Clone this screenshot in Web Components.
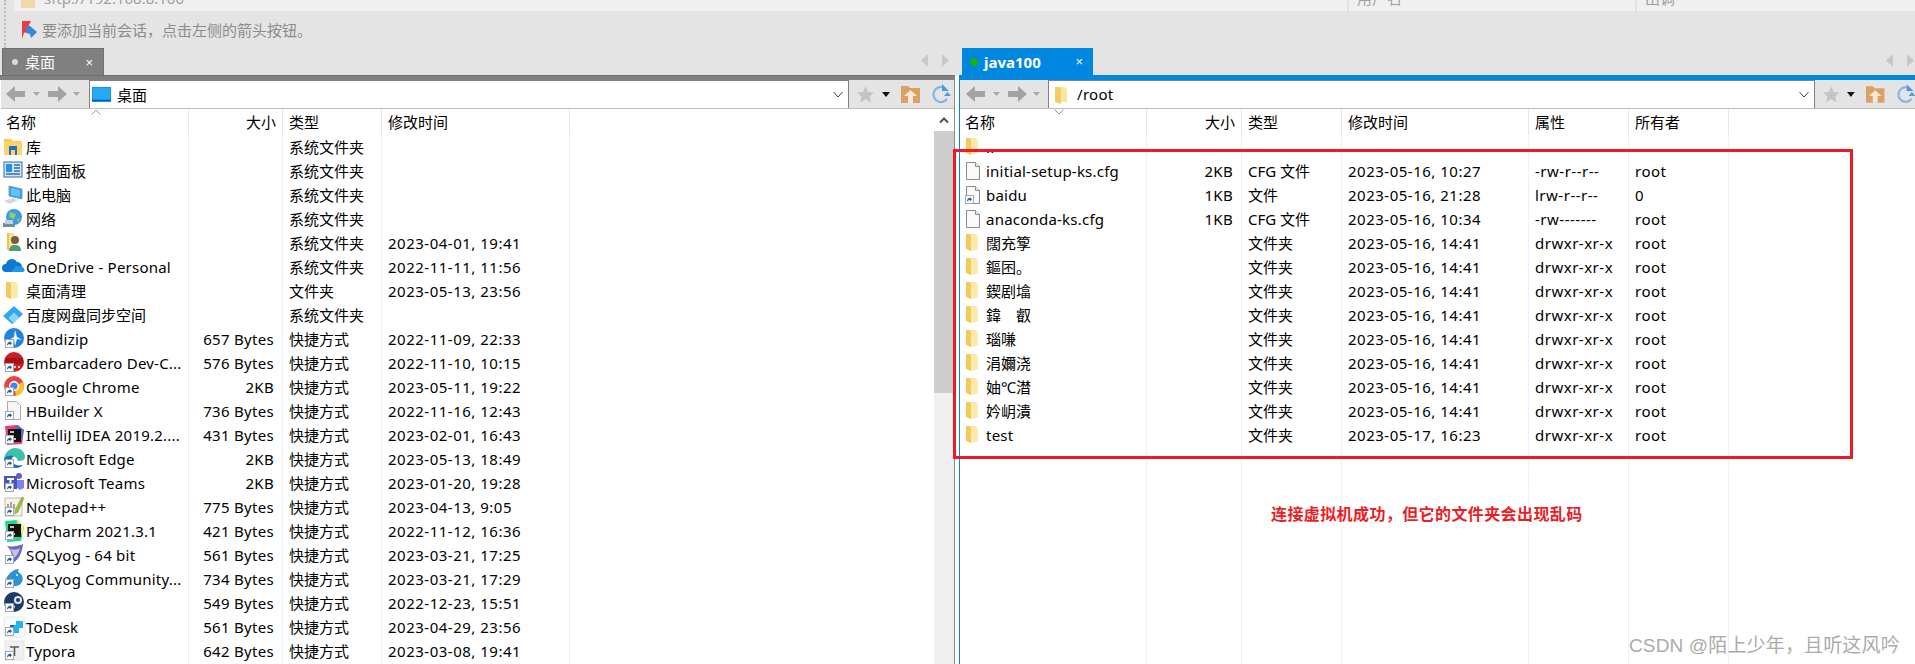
<!DOCTYPE html>
<html lang="zh"><head><meta charset="utf-8"><title>FinalShell</title>
<style>
html,body{margin:0;padding:0;background:#fff}
body{width:1915px;height:664px;overflow:hidden;position:relative;font:15px "Noto Sans","Noto Sans CJK SC",sans-serif;color:#000}
</style></head><body>
<session-bar></session-bar>
<div id="panes" style="display:flex;height:616px">
  <file-pane id="l" style="width:955px" tab="桌面" path="桌面" kind="desk" color="#808080" cols="188,94,99,188" heads="名称,大小,类型,修改时间"></file-pane>
  <file-pane id="r" style="width:956px;margin-left:4px" tab="java100" path="/root" kind="folder" color="#0087e0" cols="187,95,100,187,100,100" heads="名称,大小,类型,修改时间,属性,所有者" active></file-pane>
</div>
<note-overlay></note-overlay>
<script>
const I={
folder:'<path d="M4 3h4l1 2v15l-5-2z" fill="#f5cb58"/><path d="M8 3h5l3 2v13H9V5z" fill="#fde7a2"/><path d="M9 5v15l7-2V5z" fill="#fdeab0"/>',
doc:'<path d="M4.500 3.500h9l4 4v13h-13z" fill="#fafafa" stroke="#8a8a8a"/><path d="M13.500 3.500v4h4" fill="#eee" stroke="#8a8a8a"/>',
lib:'<path d="M2 4h7l2 2h9v14H2z" fill="#fcc94f"/><path d="M2 7h18v13H2z" fill="#fbd36b"/><path d="M7 11h8v9h-2v-5H9v5H7z" fill="#1c74c4"/>',
panel:'<rect x="2" y="3" width="18" height="15" fill="#cfe6fa" stroke="#2a6fa8"/><rect x="4" y="5" width="6" height="8" fill="#2b8fdc"/><path d="M12 6h6M12 9h6M12 12h6M4 15h14" stroke="#3372a8" stroke-width="1.5"/>',
pc:'<path d="M7 3l13 3v10L7 13z" fill="#2d9be8" stroke="#7fa7c4"/><path d="M9 5l9 2v7l-9-2z" fill="#68c2f8"/><path d="M2 18l9-3 5 2-8 4z" fill="#d4d8dc"/>',
net:'<circle cx="12" cy="10" r="8" fill="#3d9bdc"/><path d="M8 5l6 2-2 5-5-2zM15 12l3-1-2 5z" fill="#8cd067"/><path d="M1 16h12v4H1z" fill="#6d8fa6"/><path d="M3 13h8v4H3z" fill="#bcd2e0"/>',
king:'<path d="M6 2h6v14H6z" fill="#fbe08c"/><path d="M5 2h2v17H5z" fill="#f0c14f"/><circle cx="13" cy="9" r="4" fill="#7a5a3c"/><path d="M7 20c0-5 3-6 6-6s6 1 6 6z" fill="#4f9a78"/>',
cloud:'<path d="M4 17a4 4 0 0 1 0-8 6 6 0 0 1 11-2 5 5 0 0 1 5 5 3 3 0 0 1 1 5z" fill="#0f78d4"/><path d="M9 17l5-6 6 1 3 3-2 2z" fill="#1e9ae8"/>',
baidu:'<path d="M12 3l9 8-4 4-5-5-5 5 5 5-2 1-9-8z" fill="#30a7ee"/><path d="M12 10l5 5-5 5-5-5z" fill="#8ad4fa"/>',
bandi:'<circle cx="12" cy="11" r="10" fill="#1f84e0"/><path d="M13 3l2 7 5 3-5-1-2 7-1-7-5 1 5-3z" fill="#fff"/>',
dev:'<circle cx="12" cy="11" r="10" fill="#c91f25"/><rect x="3" y="7" width="18" height="6" fill="#a81116"/><path d="M6 16h3M11 16h3M16 16h2" stroke="#fff" stroke-width="1.5"/>',
chrome:'<circle cx="12" cy="11" r="10" fill="#e5453a"/><path d="M12 11L3 16a10 10 0 0 0 9 5z" fill="#35a853"/><path d="M12 11l9-4a10 10 0 0 1-7 14z" fill="#fbc02d"/><circle cx="12" cy="11" r="5" fill="#fff"/><circle cx="12" cy="11" r="3.6" fill="#4285f4"/>',
hb:'<path d="M5.500 2.500h9l4 4v14h-13z" fill="#f5f6f7" stroke="#a9a9a9"/>',
idea:'<path d="M3 3l13-1 6 5-2 14-15 1z" fill="#e0407c"/><path d="M13 2l9 5-3 9z" fill="#2d7ae0"/><rect x="6" y="6" width="13" height="13" fill="#111"/><path d="M8 9h4M8 16h6" stroke="#fff" stroke-width="1.5"/>',
edge:'<path d="M2 12C3 5 8 1 13 1c6 0 10 4 10 9 0 3-3 4-7 4-1-4-5-6-9-4z" fill="#38c3a8"/><path d="M2 12c1 6 6 9 12 9 3 0 5-1 7-3-5 1-9 0-11-3-1-3 0-4 2-6-5-1-9 0-10 3z" fill="#1a6dc0"/>',
teams:'<circle cx="17" cy="5" r="3" fill="#5b5fc7"/><path d="M14 9h8v8l-4 2-4-3z" fill="#7b83eb"/><rect x="2" y="5" width="13" height="13" fill="#4b53bc"/><path d="M5 8h7M8.500 8v8" stroke="#fff" stroke-width="2"/>',
np:'<rect x="3" y="3" width="17" height="18" fill="#f5f3e5" stroke="#bbb"/><path d="M6 14V9M9 14V7M12 14V9" stroke="#555"/><path d="M13 15l7-13 2 1-6 14-3 2z" fill="#8ac63f" stroke="#b58d2c" stroke-width=".6"/>',
pycharm:'<path d="M3 2l12-1 7 7-3 14-14 1z" fill="#21d789"/><path d="M14 1l8 7-2 8z" fill="#fcf84a"/><rect x="6" y="5" width="13" height="13" fill="#111"/><path d="M8 8h4M8 15h5" stroke="#fff" stroke-width="1.5"/>',
sql:'<path d="M5 3c6 1 11 0 16-2-1 9-4 17-13 20 3-5 3-12-3-18z" fill="#7068b8"/><path d="M8 6c4 1 7 1 10-1-1 4-3 8-6 10 0-3-2-6-4-9z" fill="#c4c2e6"/>',
sqlc:'<path d="M4 12C7 5 13 2 17 2l-1 3c4 2 6 6 4 10-2 4-7 5-11 4l1-5c-3 0-4-1-6-2z" fill="#2f92d8"/><circle cx="15" cy="8" r="1" fill="#fff"/>',
steam:'<circle cx="12" cy="11" r="10" fill="#1a3b66"/><circle cx="16" cy="9" r="4" fill="#dfe7ef"/><circle cx="16" cy="9" r="2" fill="#1a3b66"/><path d="M2 14l8 4a3 3 0 0 0 3-3l-4-2z" fill="#dfe7ef"/>',
todesk:'<rect x="2" y="2" width="21" height="20" rx="3" fill="#f8fafc" stroke="#e4e8ec"/><path d="M14 6h7v7h-4v5h-5V10h2z" fill="#1fb7ea"/><path d="M8 10h4v8H8z" fill="#1b66d8"/>',
typora:'<rect x="3" y="2" width="19" height="19" fill="#efefef" stroke="#e3e3e3"/><path d="M8 8h9M12.500 8v9" stroke="#5d5d5d" stroke-width="1.6"/>'
};
class FileIcon extends HTMLElement{
  connectedCallback(){
    const s=this.attachShadow({mode:'open'});
    const t=this.getAttribute('type'),sh=this.hasAttribute('shortcut');
    s.innerHTML=`<style>:host{display:block;position:relative;width:24px;height:24px;flex:none}svg{display:block}</style>
    <svg width="24" height="24" viewBox="0 0 24 24">${I[t]||''}${sh?'<g transform="translate(3 0)"><rect x="0.500" y="12.500" width="8" height="8" fill="#fff" stroke="#a8a8a8"/><path d="M2 19c0-3 1-3.800 2.800-4V14l2.200 2.200L4.800 18.500V17c-1 0-2 .6-2.800 2" fill="#1a5fa8"/></g>':''}</svg>`;
  }
}
customElements.define('file-icon',FileIcon);

class SessionBar extends HTMLElement{
  connectedCallback(){
    this.attachShadow({mode:'open'}).innerHTML=`<style>
    :host{display:block;height:75px;background:#e4e4e4;position:relative;color:#999;font:15px "Noto Sans","Noto Sans CJK SC",sans-serif}
    .grip{position:absolute;left:4px;top:0;height:48px;border-left:2px dotted #bdbdbd}
    .row{margin-left:14px;height:11px;background:#f0f0f0;display:flex;overflow:hidden;line-height:20px}
    .row>div{margin-top:-12px;white-space:nowrap;color:#a0a0a0}
    .a{width:1333px;display:flex;padding-left:7px;box-sizing:border-box;gap:9px}
    .b{width:288px;box-sizing:border-box;padding-left:8px;border-left:2px solid #e2e2e2}
    .c{flex:1;padding-left:8px;border-left:2px solid #e2e2e2}
    .hint{display:flex;align-items:center;height:37px;padding-left:21px;gap:5px;color:#8c8c8c}
    </style>
    <div class="grip"></div>
    <div class="row"><div class="a"><svg width="14" height="20" viewBox="0 0 14 20"><rect y="8" width="14" height="12" fill="#f0d8a8"/></svg><span>sftp://192.168.8.100</span></div><div class="b">用户名</div><div class="c">出调</div></div>
    <div class="hint"><svg width="16" height="18" viewBox="0 0 16 18"><path d="M1 0h9l-3 6 1 4-5 2-2 6z" fill="#ee3a43"/><path d="M5 5h4l7 6-6 6-1-4-4-1z" fill="#3d83d8"/></svg><span>要添加当前会话，点击左侧的箭头按钮。</span></div>`;
  }
}
customElements.define('session-bar',SessionBar);

class FilePane extends HTMLElement{
  connectedCallback(){
    const a=n=>this.getAttribute(n);
    const cols=a('cols').split(',').map(x=>x+'px').join(' ');
    const heads=a('heads').split(',');
    const active=this.hasAttribute('active');
    const s=this.attachShadow({mode:'open'});
    const arrow=(d)=>`<svg width="20" height="20" viewBox="0 0 20 20"><path d="${d}" fill="#a3a3a3"/></svg>`;
    const drop=`<svg width="9" height="6" viewBox="0 0 9 6"><path d="M1 1h7L4.500 5z" fill="#a8a8a8"/></svg>`;
    const icon=a('kind')==='desk'
      ?'<svg width="19" height="15" viewBox="0 0 19 15"><rect width="19" height="15" fill="#0e97ee"/><rect y="13" width="19" height="1" fill="#0a5a9c"/><rect x="1" y="1" width="17" height="11" fill="#27a8f5"/></svg>'
      :'<svg width="14" height="20" viewBox="0 0 14 20"><path d="M1 2h5l1 2v15l-6-2z" fill="#f3cd62"/><path d="M6 2h5l2 3v12H7V4z" fill="#fde59d"/></svg>';
    s.innerHTML=`<style>
    :host{display:block;position:relative;min-width:0;--c:${a('color')};font:15px "Noto Sans","Noto Sans CJK SC",sans-serif}
    .tabs{position:absolute;left:${active?'3px':'2px'};top:-27px;height:27px;width:${active?'131px':'102px'};background:var(--c);color:#fff;display:flex;align-items:center;box-sizing:border-box;${active?'':'border:1px solid #707070;border-bottom:0;'}}
    .dot{width:${active?8:6}px;height:${active?8:6}px;border-radius:50%;background:${active?'#12b312':'#d8d8d8'};margin-left:${active?8:9}px;flex:none}
    .tt{margin-left:${active?6:7}px;font-weight:${active?700:400};flex:1;line-height:20px}
    .x{margin-right:10px;font:13px "Liberation Sans",sans-serif}
    .nav{position:absolute;top:-21px;right:${active?'1px':'6px'};display:flex;gap:12px}
    .bar{height:5px;background:var(--c);border-top:${active?0:'1px solid #6f6f6f'};box-sizing:border-box}
    .box{border-left:1px solid ${active?'#0087e0':'transparent'};border-right:${active?0:'1px solid #8a8a8a'};height:584px;box-sizing:border-box}
    .tb{height:28px;background:#e4e4e4;display:flex;align-items:center;position:relative;border-bottom:1px solid #bdbdbd}
    .addr{position:absolute;left:88px;right:${active?'100px':'105px'};top:0;height:28px;background:#fff;border:1px solid #808080;border-bottom:0;box-sizing:border-box;display:flex;align-items:center;padding-left:${active?5:2}px;gap:${active?9:6}px;line-height:20px}
    .addr span{${active?'margin-top:-2px;letter-spacing:.3px':''}}
    .addr .chev{position:absolute;right:5px;top:10px}
    .left{display:flex;align-items:center;padding-left:${active?6:5}px;height:28px}
    .right{position:absolute;right:0;top:0;height:28px;width:${active?'100px':'105px'};display:flex;align-items:center}
    .table{position:relative;height:555px;overflow:hidden;background:#fff}
    .hd{display:grid;grid-template-columns:${cols};height:26px;line-height:26px}
    .hd>div{padding-left:6px;border-right:1px solid #e6e6e6;box-sizing:border-box}
    .hd>div:first-child{padding-left:5px}
    .hd>div.n{text-align:right;padding-right:6px}
    .cols{position:absolute;left:0;top:26px;bottom:0;display:grid;grid-template-columns:${cols}}
    .cols>div{border-right:1px solid #e8f0fa;box-sizing:border-box}
    .sort{position:absolute;left:${active?'94px':'90px'};top:0}
    .sb{position:absolute;right:0;top:0;bottom:0;width:20px;background:#f0f0f0;display:${active?'none':'block'}}
    .sb i{display:block;height:22px;background:#fff;position:relative}
    .sb b{display:block;height:262px;background:#cdcdcd}
    .sb svg{position:absolute;left:5px;top:7px}
    .rows{position:relative}
    ::slotted(file-row){--cols:${cols};--pad:${active?2:1}px}
    </style>
    <div class="tabs"><span class="dot"></span><span class="tt">${a('tab')}</span><span class="x">×</span></div>
    <div class="nav"><svg width="8" height="13" viewBox="0 0 8 13"><path d="M7 0v13L0 6.500z" fill="#c8c8c8"/></svg><svg width="8" height="13" viewBox="0 0 8 13"><path d="M1 0v13l7-6.500z" fill="#c8c8c8"/></svg></div>
    <div class="bar"></div>
    <div class="box">
    <div class="tb">
      <div class="left">
        ${arrow('M0 10l9-8v5h10v6H9v5z')}<span style="width:6px"></span>${drop}<span style="width:6px"></span>${arrow('M20 10l-9-8v5H1v6h10v5z')}<span style="width:5px"></span>${drop}
      </div>
      <div class="addr">${icon}<span>${a('path')}</span><svg class="chev" width="10" height="7" viewBox="0 0 10 7"><path d="M.5 1L5 6l4.500-5" fill="none" stroke="#444"/></svg></div>
      <div class="right">
        <svg style="margin-left:8px" width="17" height="17" viewBox="0 0 17 17"><path d="M8.500 0l2.500 6 6 .5-4.500 4 1.500 6-5.500-3.200L3 16.500l1.500-6L0 6.500 6 6z" fill="#c4c4c4"/></svg>
        <svg style="margin-left:8px" width="8" height="5" viewBox="0 0 8 5"><path d="M0 0h8L4 5z" fill="#111"/></svg>
        <svg style="margin-left:11px" width="19" height="18" viewBox="0 0 19 18"><path d="M0 1h7l2 2h10v15H0z" fill="#dba064"/><path d="M9.500 5L16 11h-4v7H7v-7H3z" fill="#f5ead6"/></svg>
        <svg style="margin-left:11px" width="20" height="20" viewBox="0 0 20 20"><path d="M14 4.200A7.500 7.500 0 1 0 16 15" fill="none" stroke="#7fb6e6" stroke-width="2.200"/><path d="M11 0v7l7 0z M13 12h7l-3.500-4z" fill="#4c9be0"/></svg>
      </div>
    </div>
    <div class="table">
      <div class="cols">${heads.map(()=>'<div></div>').join('')}</div>
      <div class="hd">${heads.map(h=>`<div class="${h==='大小'?'n':''}">${h}</div>`).join('')}</div>
      <svg class="sort" width="10" height="6" viewBox="0 0 10 6"><path d="${active?'M.5 .5L5 5l4.500-4.500':'M.5 5.500L5 1l4.500 4.500'}" fill="none" stroke="#999"/></svg>
      <div class="rows"><slot></slot></div>
      <div class="sb"><i><svg width="10" height="8" viewBox="0 0 10 8"><path d="M1 6.500l4-4 4 4" fill="none" stroke="#505050" stroke-width="2"/></svg></i><b></b></div>
    </div></div>`;
  }
}
customElements.define('file-pane',FilePane);

class FileRow extends HTMLElement{
  connectedCallback(){
    const v=JSON.parse(this.getAttribute('data-v'));
    const latin=/^[\x20-\x7e]+$/.test(v[2]);
    const ctype=v[4];
    this.attachShadow({mode:'open'}).innerHTML=`<style>
    :host{display:grid;grid-template-columns:var(--cols);height:24px;line-height:24px;white-space:nowrap}
    .c{padding-left:6px;box-sizing:border-box;overflow:hidden}
    .n{display:flex;padding-left:var(--pad);overflow:visible}
    .l{letter-spacing:.22px}
    .r{text-align:right;padding:0 9px 0 0;letter-spacing:.3px}
    .m{letter-spacing:.5px}
    </style>
    <div class="c n"><file-icon type="${v[0]}" ${v[1]?'shortcut':''}></file-icon><span class="${latin?'l':''}">${v[2]}</span></div>
    <div class="c r">${v[3]||''}</div><div class="c">${ctype}</div>${v.slice(5).map(x=>`<div class="c m">${x}</div>`).join('')}`;
  }
}
customElements.define('file-row',FileRow);

class NoteOverlay extends HTMLElement{
  connectedCallback(){
    this.attachShadow({mode:'open'}).innerHTML=`<style>
    :host{display:block}
    .rect{position:absolute;left:953px;top:149px;width:900px;height:310px;border:3px solid #ed1c24;box-sizing:border-box}
    .note{position:absolute;left:1271px;top:502px;color:#ed1c24;font:700 16px/22px "Noto Sans CJK SC",sans-serif;letter-spacing:.4px;white-space:nowrap}
    .wm{position:absolute;left:1629px;top:633px;color:#aaa;font:19px/26px "Liberation Sans","Noto Sans CJK SC",sans-serif;letter-spacing:.15px;white-space:nowrap}
    </style>
    <div class="rect"></div><div class="note">连接虚拟机成功，但它的文件夹会出现乱码</div><div class="wm">CSDN @陌上少年，且听这风吟</div>`;
  }
}
customElements.define('note-overlay',NoteOverlay);

const SF='系统文件夹',SC='快捷方式';
const L=[['lib',0,'库','',SF,''],['panel',0,'控制面板','',SF,''],['pc',0,'此电脑','',SF,''],['net',0,'网络','',SF,''],
['king',0,'king','',SF,'2023-04-01, 19:41'],['cloud',0,'OneDrive - Personal','',SF,'2022-11-11, 11:56'],['folder',0,'桌面清理','','文件夹','2023-05-13, 23:56'],['baidu',0,'百度网盘同步空间','',SF,''],
['bandi',1,'Bandizip','657 Bytes',SC,'2022-11-09, 22:33'],['dev',1,'Embarcadero Dev-C...','576 Bytes',SC,'2022-11-10, 10:15'],['chrome',1,'Google Chrome','2KB',SC,'2023-05-11, 19:22'],['hb',1,'HBuilder X','736 Bytes',SC,'2022-11-16, 12:43'],['idea',1,'IntelliJ IDEA 2019.2....','431 Bytes',SC,'2023-02-01, 16:43'],['edge',1,'Microsoft Edge','2KB',SC,'2023-05-13, 18:49'],['teams',1,'Microsoft Teams','2KB',SC,'2023-01-20, 19:28'],['np',1,'Notepad++','775 Bytes',SC,'2023-04-13, 9:05'],['pycharm',1,'PyCharm 2021.3.1','421 Bytes',SC,'2022-11-12, 16:36'],['sql',1,'SQLyog - 64 bit','561 Bytes',SC,'2023-03-21, 17:25'],['sqlc',1,'SQLyog Community...','734 Bytes',SC,'2023-03-21, 17:29'],['steam',1,'Steam','549 Bytes',SC,'2022-12-23, 15:51'],['todesk',1,'ToDesk','561 Bytes',SC,'2023-04-29, 23:56'],['typora',1,'Typora','642 Bytes',SC,'2023-03-08, 19:41']];
const F='文件夹',D='2023-05-16, 14:41',P='drwxr-xr-x';
const R=[['folder',0,'..','','','','',''],['doc',0,'initial-setup-ks.cfg','2KB','CFG 文件','2023-05-16, 10:27','-rw-r--r--','root'],['doc',1,'baidu','1KB','文件','2023-05-16, 21:28','lrw-r--r--','0'],['doc',0,'anaconda-ks.cfg','1KB','CFG 文件','2023-05-16, 10:34','-rw-------','root'],
...['闊充箰','鏂囨。','鍥剧墖','鍏　叡','瑙嗛','涓嬭浇','妯℃澘','妗岄潰'].map(n=>['folder',0,n,'',F,D,P,'root']),['folder',0,'test','',F,'2023-05-17, 16:23',P,'root']];
function fill(id,rows){const p=document.getElementById(id);for(const r of rows){const e=document.createElement('file-row');e.setAttribute('data-v',JSON.stringify(r));p.appendChild(e);}}
fill('l',L);fill('r',R);
</script>
</body></html>
